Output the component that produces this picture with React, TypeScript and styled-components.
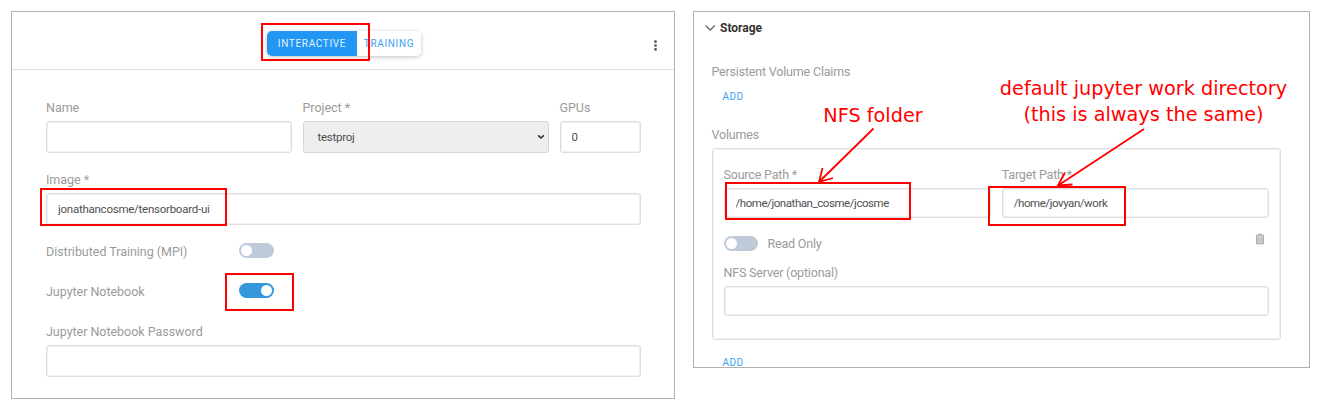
import React from "react";
import styled, { createGlobalStyle } from "styled-components";

const GlobalStyle = createGlobalStyle`
  * { box-sizing: border-box; }
  body {
    margin: 0;
    background: #fff;
    font-family: Roboto, "Liberation Sans", sans-serif;
  }
`;

const Page = styled.main`
  position: relative;
  display: flex;
  align-items: flex-start;
  gap: 18px;
  width: 1321px;
  height: 414px;
  padding: 11px;
  overflow: hidden;
`;

const Panel = styled.section<{ $w: number; $h: number; $label: number; $value: number }>`
  --label-spacing: ${(p) => p.$label}px;
  --value-spacing: ${(p) => p.$value}px;
  flex: none;
  width: ${(p) => p.$w}px;
  height: ${(p) => p.$h}px;
  border: 1px solid #b0b0b0;
  overflow: hidden;
`;

const Header = styled.header`
  display: grid;
  grid-template-columns: 1fr auto 1fr;
  align-items: center;
  height: 58px;
  padding: 5px 15px 0 0;
  border-bottom: 1px solid #dedede;
`;

const Tabs = styled.div`
  grid-column: 2;
  display: flex;
  width: 154px;
  height: 25px;
  margin-left: 16px;
  border-radius: 5px;
  box-shadow: 0 1px 4px rgba(0, 0, 0, 0.25);
  overflow: hidden;
`;

const Tab = styled.button<{ $active?: boolean }>`
  flex: none;
  width: ${(p) => (p.$active ? 90 : 64)}px;
  padding: 0 0 0 1px;
  border: 0;
  background: ${(p) => (p.$active ? "#2196f3" : "#fff")};
  color: ${(p) => (p.$active ? "#e3f2fd" : "#3ba1f2")};
  font: 400 10px/25px Roboto, sans-serif;
  letter-spacing: 0.66px;
  text-align: center;
`;

const MenuButton = styled.button`
  justify-self: end;
  display: flex;
  padding: 0;
  margin-top: 3px;
  border: 0;
  background: none;
`;

const Form = styled.div`
  display: flex;
  flex-direction: column;
  padding: 30px 33px 0 34px;
`;

const FieldRow = styled.div<{ $columns: string }>`
  display: grid;
  grid-template-columns: ${(p) => p.$columns};
  column-gap: 11px;
`;

const Field = styled.label<{ $top?: number }>`
  display: flex;
  flex-direction: column;
  margin-top: ${(p) => p.$top ?? 0}px;
`;

const Label = styled.span<{ $h?: number }>`
  height: ${(p) => p.$h ?? 21}px;
  color: #9b9b9b;
  font-size: 12.5px;
  line-height: 16px;
  letter-spacing: var(--label-spacing);
  white-space: nowrap;
`;

const Input = styled.input<{ $h?: number }>`
  width: 100%;
  height: ${(p) => p.$h ?? 32}px;
  padding: 0 11px;
  border: 1px solid #dedede;
  box-shadow: inset 0 0 0 1px #f1f1f1;
  border-radius: 3px;
  outline: 0;
  background: #fff;
  color: #4f4f4f;
  font: 400 11.5px Roboto, sans-serif;
  letter-spacing: var(--value-spacing);
`;

const SelectBox = styled.div`
  display: flex;
  align-items: center;
  justify-content: space-between;
  height: 32px;
  padding: 0 3px 0 14px;
  border: 1px solid #d6d6d6;
  border-radius: 3px;
  background: #eee;
  color: #4f4f4f;
  font-size: 11.5px;
  letter-spacing: var(--value-spacing);
`;

const SwitchRow = styled.div<{ $top: number }>`
  display: grid;
  grid-template-columns: 193px auto;
  align-items: start;
  height: 16px;
  margin-top: ${(p) => p.$top}px;
`;

const SwitchLabel = styled(Label)`
  padding-top: 1px;
`;

const Switch = styled.span<{ $on?: boolean; $w?: number }>`
  display: flex;
  justify-content: ${(p) => (p.$on ? "flex-end" : "flex-start")};
  align-items: center;
  width: ${(p) => p.$w ?? 35}px;
  height: 15px;
  padding: 0 2px;
  border-radius: 8px;
  background: ${(p) => (p.$on ? "#3498db" : "#bfcad9")};

  &::after {
    content: "";
    width: 11px;
    height: 11px;
    border-radius: 50%;
    background: #fff;
  }
`;

const StorageBody = styled.div`
  display: flex;
  flex-direction: column;
  padding: 8px 28px 0 11px;
`;

const SectionTitle = styled.h2`
  display: flex;
  align-items: center;
  gap: 4px;
  height: 16px;
  margin: 0;
  color: #333;
  font-size: 12px;
  font-weight: 700;
`;

const GroupLabel = styled(Label)<{ $top: number }>`
  margin: ${(p) => p.$top}px 0 0 6.5px;
`;

const AddButton = styled.button<{ $top: number }>`
  align-self: flex-start;
  height: 14px;
  margin: ${(p) => p.$top}px 0 0 17.5px;
  padding: 0;
  border: 0;
  background: none;
  color: #3ba1f2;
  font: 400 10px/14px Roboto, sans-serif;
  letter-spacing: 0.4px;
`;

const VolumeCard = styled.div`
  height: 192px;
  margin-left: 6.5px;
  padding: 18px 11px 0;
  border: 1px solid #dedede;
  box-shadow: inset 0 0 0 1px #f1f1f1;
  border-radius: 3px;
`;

const VolumeOptions = styled.div`
  display: flex;
  align-items: flex-start;
  height: 18px;
  margin-top: 18px;
`;

const ReadOnlyLabel = styled(Label)`
  margin-left: 10px;
`;

const DeleteButton = styled.button`
  display: flex;
  margin: -3px 4.5px 0 auto;
  padding: 0;
  border: 0;
  background: none;
`;

const Highlight = styled.div<{ $x: number; $y: number; $w: number; $h: number }>`
  position: absolute;
  left: ${(p) => p.$x}px;
  top: ${(p) => p.$y}px;
  width: ${(p) => p.$w}px;
  height: ${(p) => p.$h}px;
  border: 2px solid #f00;
  pointer-events: none;
`;

const Note = styled.div<{ $x: number; $y: number; $w: number }>`
  position: absolute;
  left: ${(p) => p.$x}px;
  top: ${(p) => p.$y}px;
  width: ${(p) => p.$w}px;
  color: #f00;
  font: 400 19.25px/26px "DejaVu Sans", sans-serif;
  text-align: center;
  white-space: nowrap;
`;

const Arrows = styled.svg`
  position: absolute;
  left: 0;
  top: 0;
  pointer-events: none;
`;

export default function App() {
  return (
    <Page>
      <GlobalStyle />
      <Panel $w={664} $h={388} $label={-0.03} $value={-0.25}>
        <Header>
          <Tabs>
            <Tab $active>INTERACTIVE</Tab>
            <Tab>TRAINING</Tab>
          </Tabs>
          <MenuButton aria-label="More">
            <svg width="6" height="12" viewBox="0 0 6 12" fill="#5a5a5a">
              <rect x="1.2" y="1.3" width="2.6" height="2.6" rx="0.8" />
              <rect x="1.2" y="5.2" width="2.6" height="2.6" rx="0.8" />
              <rect x="1.2" y="9.1" width="2.6" height="2.6" rx="0.8" />
            </svg>
          </MenuButton>
        </Header>
        <Form>
          <FieldRow $columns="245.5px 246px 1fr">
            <Field>
              <Label>Name</Label>
              <Input defaultValue="" />
            </Field>
            <Field>
              <Label>Project *</Label>
              <SelectBox>
                testproj
                <svg width="8" height="6" viewBox="0 0 8 6" fill="none" stroke="#333" strokeWidth="1.6">
                  <path d="M1.2 1.4 4 4 6.8 1.4" />
                </svg>
              </SelectBox>
            </Field>
            <Field>
              <Label>GPUs</Label>
              <Input defaultValue="0" />
            </Field>
          </FieldRow>
          <Field $top={19}>
            <Label>Image *</Label>
            <Input defaultValue="jonathancosme/tensorboard-ui" />
          </Field>
          <SwitchRow $top={18}>
            <SwitchLabel>Distributed Training (MPI)</SwitchLabel>
            <Switch />
          </SwitchRow>
          <SwitchRow $top={24}>
            <SwitchLabel>Jupyter Notebook</SwitchLabel>
            <Switch $on />
          </SwitchRow>
          <Field $top={25}>
            <Label>Jupyter Notebook Password</Label>
            <Input defaultValue="" />
          </Field>
        </Form>
      </Panel>

      <Panel $w={617} $h={357} $label={-0.19} $value={-0.44}>
        <StorageBody>
          <SectionTitle>
            <svg width="11" height="8" viewBox="0 0 11 8" fill="none" stroke="#666" strokeWidth="1.3">
              <path d="M0.7 1.5 5.2 6 9.7 1.5" />
            </svg>
            Storage
          </SectionTitle>
          <GroupLabel $top={28} $h={16}>Persistent Volume Claims</GroupLabel>
          <AddButton $top={10}>ADD</AddButton>
          <GroupLabel $top={23} $h={21}>Volumes</GroupLabel>
          <VolumeCard>
            <FieldRow $columns="1fr 1fr">
              <Field>
                <Label>Source Path *</Label>
                <Input $h={30} defaultValue="/home/jonathan_cosme/jcosme" />
              </Field>
              <Field>
                <Label>Target Path *</Label>
                <Input $h={30} defaultValue="/home/jovyan/work" />
              </Field>
            </FieldRow>
            <VolumeOptions>
              <Switch $w={34} />
              <ReadOnlyLabel>Read Only</ReadOnlyLabel>
              <DeleteButton aria-label="Delete">
                <svg width="10" height="12" viewBox="0 0 10 12" fill="none" stroke="#9c9ca2">
                  <path d="M0.7 2.2H9.3M3.3 1.2H6.7" />
                  <path d="M1.7 3V10.8H8.3V3" fill="#d8dade" />
                  <path d="M3.8 4V9.5M6.2 4V9.5" strokeWidth="0.7" />
                </svg>
              </DeleteButton>
            </VolumeOptions>
            <Field $top={11}>
              <Label>NFS Server (optional)</Label>
              <Input $h={30} defaultValue="" />
            </Field>
          </VolumeCard>
          <AddButton $top={16}>ADD</AddButton>
        </StorageBody>
      </Panel>

      <Highlight $x={261} $y={23} $w={109} $h={38} />
      <Highlight $x={40} $y={188} $w={187} $h={38} />
      <Highlight $x={225} $y={273} $w={69} $h={38} />
      <Highlight $x={725} $y={182} $w={186} $h={38} />
      <Highlight $x={988} $y={186} $w={138} $h={40} />
      <Note $x={813} $y={103} $w={120}>NFS folder</Note>
      <Note $x={993.5} $y={76} $w={300}>
        default jupyter work directory
        <br />
        (this is always the same)
      </Note>
      <Arrows width="1321" height="414" fill="none" stroke="#f00" strokeWidth="1.8">
        <path d="M873.5 128.5 819 182M822.5 168 819 182 833 178" />
        <path d="M1144 129 1058 185.500M1065 172.500 1058 185.500 1072.500 184.500" />
      </Arrows>
    </Page>
  );
}
